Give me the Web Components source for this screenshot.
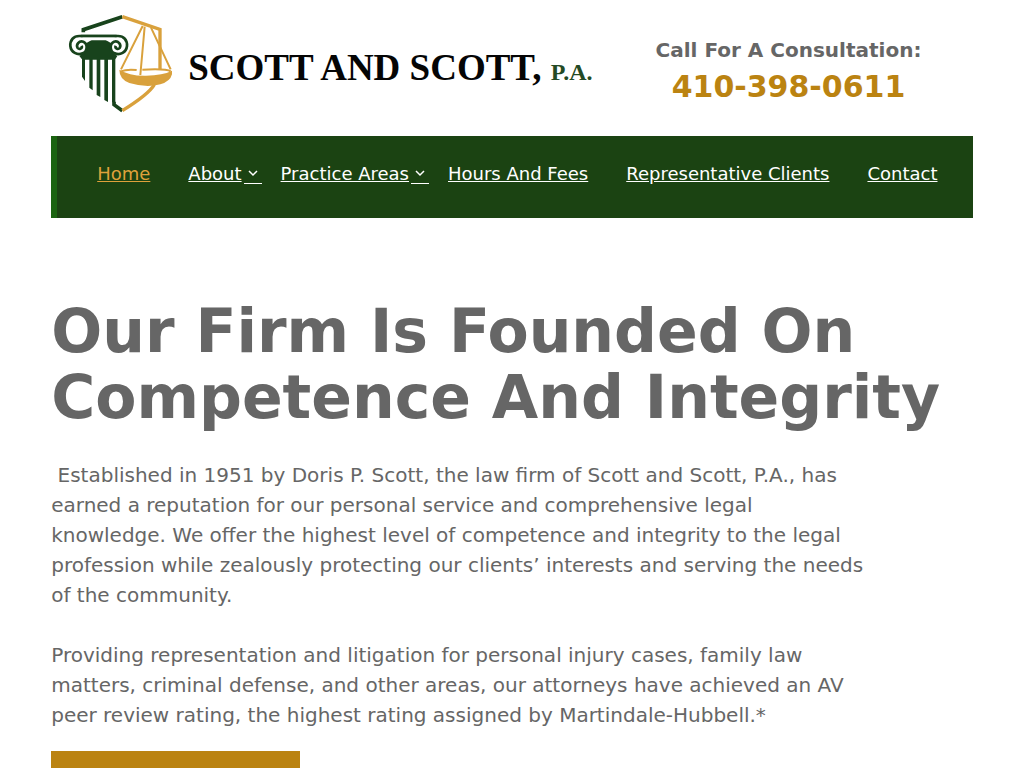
<!DOCTYPE html>
<html lang="en">
<head>
<meta charset="utf-8">
<meta name="viewport" content="width=device-width, initial-scale=1">
<title>Scott and Scott, P.A.</title>
<style>
body { margin: 0; background: #fff; color: #666; font: 20px/30px "DejaVu Sans", Verdana, sans-serif; }
</style>
</head>
<body>
<law-page>
  <site-header slot="header">
    <firm-logo slot="logo"></firm-logo>
    <phone-callout slot="phone" number="410-398-0611">Call For A Consultation:</phone-callout>
  </site-header>
  <main-nav slot="nav">
    <nav-item current>Home</nav-item>
    <nav-item menu>About</nav-item>
    <nav-item menu>Practice Areas</nav-item>
    <nav-item>Hours And Fees</nav-item>
    <nav-item>Representative Clients</nav-item>
    <nav-item>Contact</nav-item>
  </main-nav>
  <intro-section>
    <span slot="title">Our Firm Is Founded On Competence And Integrity</span>
    <span slot="lead">&nbsp;Established in 1951 by Doris P. Scott, the law firm of Scott and Scott, P.A., has earned a reputation for our personal service and comprehensive legal knowledge. We offer the highest level of competence and integrity to the legal profession while zealously protecting our clients’ interests and serving the needs of the community.</span>
    <span slot="more">Providing representation and litigation for personal injury cases, family law matters, criminal defense, and other areas, our attorneys have achieved an AV peer review rating, the highest rating assigned by Martindale-Hubbell.*</span>
  </intro-section>
</law-page>
<script>
const define = (name, markup, setup) => customElements.define(name, class extends HTMLElement {
  constructor() {
    super();
    this.attachShadow({ mode: "open" }).innerHTML = markup;
  }
  connectedCallback() { if (setup) setup(this, this.shadowRoot); }
});

define("law-page", `
<style>
:host { display: block; width: 90%; margin: 0 auto; }
</style>
<slot name="header"></slot><slot name="nav"></slot><main><slot></slot></main>`);

define("site-header", `
<style>
:host { display: block; }
header { display: grid; grid-template-columns: 3fr 2fr; align-items: start; padding: 10px 0 18px; }
</style>
<header><slot name="logo"></slot><slot name="phone"></slot></header>`);

define("firm-logo", `
<style>
:host { display: block; }
a { display: flex; align-items: center; gap: 16px; height: 108px; padding-left: 17px; color: #050505; text-decoration: none; white-space: nowrap; font: bold 37px/40px "Liberation Serif", "Times New Roman", serif; }
svg { width: 104px; height: 100px; flex: none; }
.name { padding-top: 12px; }
small { font-size: 24px; color: #244a24; }
</style>
<a href="#home">
<svg viewBox="54 27 312 300" aria-hidden="true">
  <g fill="none" stroke="#18431c" stroke-width="11">
    <path d="M100 82V74L217 35" />
    <path d="M192 290V299L217 317" />
  </g>
  <path fill="#18431c" d="M90 106H202L186 130Q188 146 202 153L196 163V296L186 291V164H174V291L163 285V164H151V276L140 270V164H128V256L118 248V164H105V228L96 215V163L88 153Q104 144 106 130Z" />
  <g fill="none" stroke="#18431c">
    <path d="M146 93H90C70 92 60 106 61 123C63 142 82 152 98 145C113 139 114 116 100 110C87 106 77 120 83 129C88 135 98 130 95 122" fill="#fff" stroke-width="8" />
    <path d="M146 93H202C222 92 232 106 231 123C229 142 210 152 194 145C179 139 178 116 192 110C205 106 215 120 209 129C204 135 194 130 197 122" fill="#fff" stroke-width="8" />
    <path d="M92 93H200" stroke-width="8" />
  </g>
  <path d="M98 101H194" stroke="#fff" stroke-width="6" />
  <g fill="none" stroke="#d9a13c">
    <path d="M217 35L330 73V194" stroke-width="10" />
    <path d="M217 317Q296 268 313 239" stroke-width="10" />
    <path d="M278 63L213 193M284 65L271 210M303 68L362 193" stroke-width="6" />
    <path d="M213 199Q229 192 260 195M277 194Q348 190 362 199" stroke-width="6" />
  </g>
  <path d="M208 194Q238 213 288 212Q340 212 367 197Q368 227 331 238Q288 249 238 234Q208 222 208 194Z" fill="#d9a13c" />
</svg>
<span class="name">SCOTT AND SCOTT, <small>P.A.</small></span>
</a>`);

define("phone-callout", `
<style>
:host { display: block; text-align: center; font-weight: bold; padding-top: 25px; }
p { margin: 0; font-size: 20px; line-height: 30px; }
a { display: block; color: #bb8311; font-size: 30px; line-height: 44px; text-decoration: none; }
</style>
<p><slot></slot></p><a></a>`, (el, root) => {
  const a = root.querySelector("a");
  a.textContent = el.getAttribute("number");
  a.href = "tel:" + a.textContent;
});

define("main-nav", `
<style>
:host { display: block; }
nav { display: flex; flex-wrap: wrap; border-left: 6px solid #1b6411; background: #1b4312; padding: 26px 19px 32px 40px; font-size: 18px; line-height: 24px; }
</style>
<nav aria-label="Main"><slot></slot></nav>`);

define("nav-item", `
<style>
:host { display: block; margin-right: 38px; white-space: nowrap; }
:host([menu]) { margin-right: 19px; }
:host(:last-child) { margin-right: 0; }
a { display: flex; color: #fff; text-decoration: underline; }
:host([current]) a { color: #dfa13b; }
svg { display: none; width: 18px; height: 21px; margin-left: 2px; border-bottom: 1px solid currentColor; }
:host([menu]) svg { display: block; }
</style>
<a href="#"><slot></slot><svg viewBox="0 0 18 21" aria-hidden="true"><path d="M5 9L9 13L13 9" fill="none" stroke="currentColor" stroke-width="1.5"/></svg></a>`, (el, root) => {
  root.querySelector("a").href = "#" + el.textContent.trim().toLowerCase().replace(/ /g, "-");
});

define("intro-section", `
<style>
:host { display: block; padding: 80px 0 24px; }
h1 { margin: 0 0 30px; font-size: 60px; line-height: 66px; font-weight: bold; }
.copy { max-width: 820px; }
p { margin: 0 0 30px; }
p:last-child { margin-bottom: 21px; }
.cta { display: block; width: 27%; height: 56px; background: #bb8311; }
</style>
<h1><slot name="title"></slot></h1>
<div class="copy"><p><slot name="lead"></slot></p><p><slot name="more"></slot></p></div>
<a class="cta" href="#contact" aria-label="Contact"></a>`);
</script>
</body>
</html>
